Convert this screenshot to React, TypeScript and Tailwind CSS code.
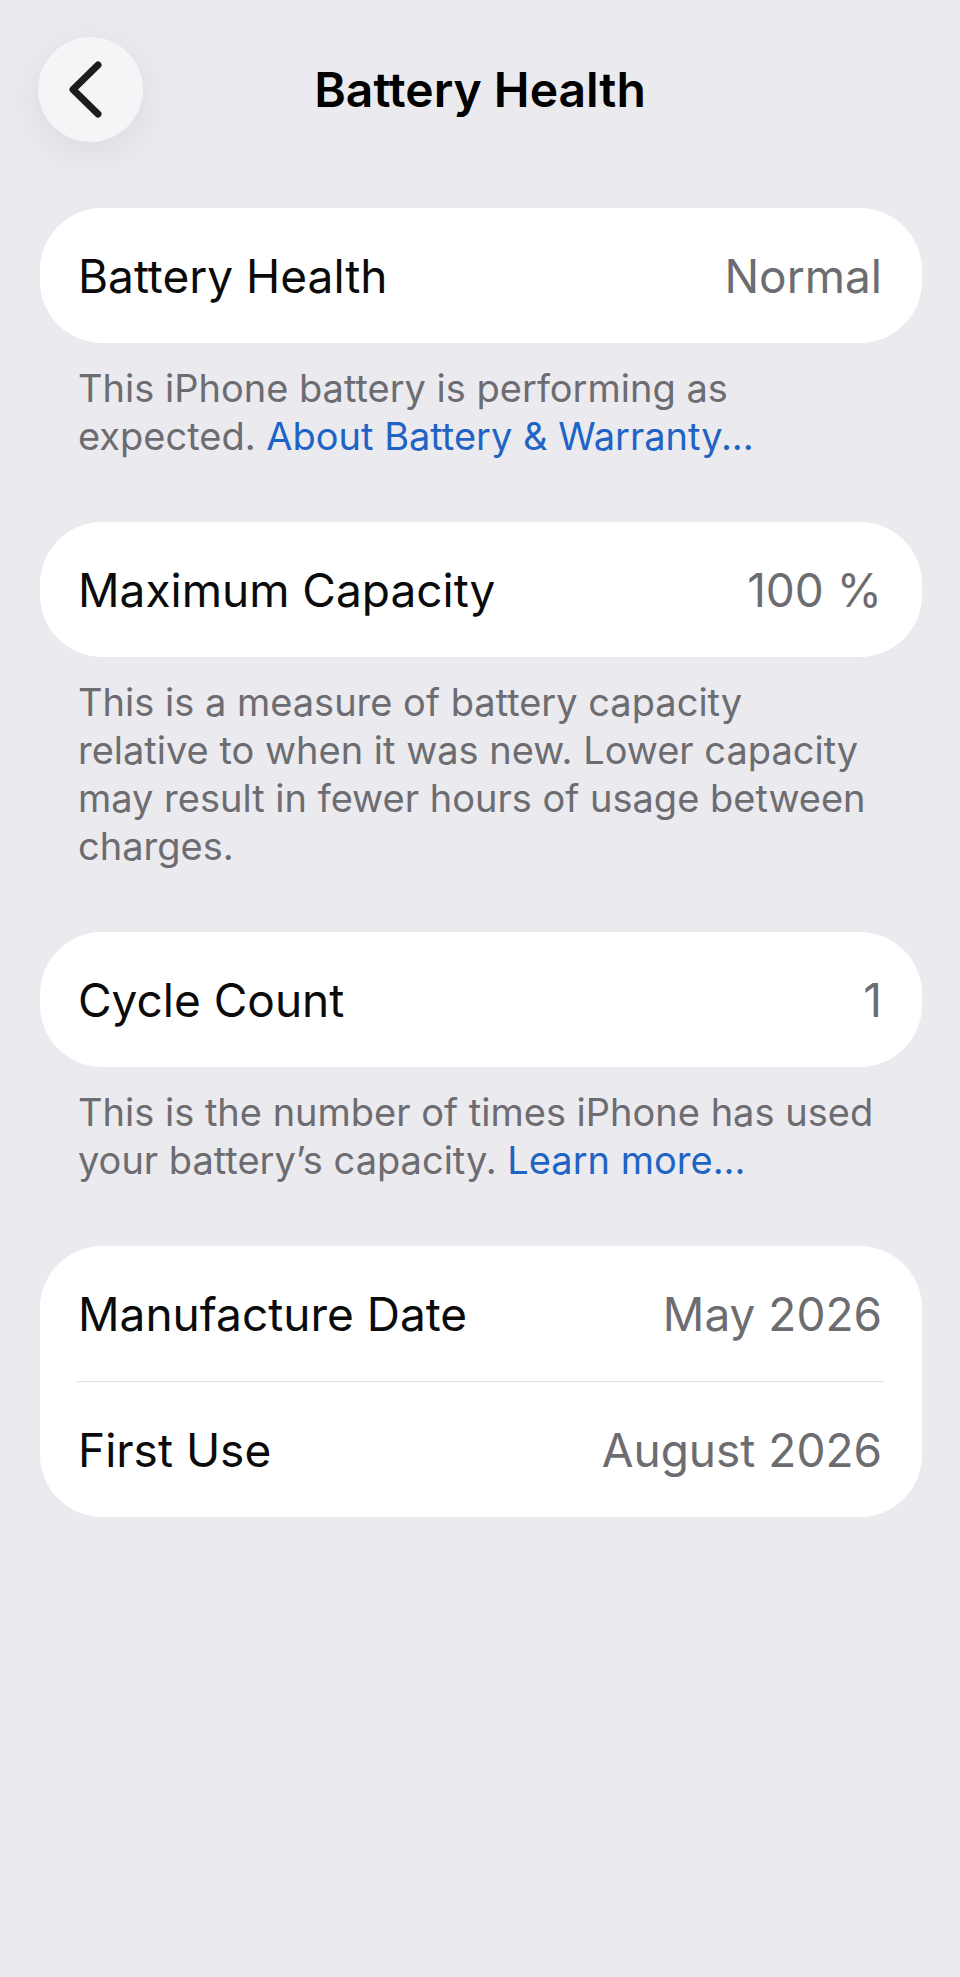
const font = "font-['Inter','Liberation_Sans',sans-serif]";

function Row({ label, value }: { label: string; value: string }) {
  return (
    <div className="flex h-[135px] items-center justify-between pl-[38px] pr-[40px]">
      <span className="text-[46px] leading-none text-[#0b0b0c]">{label}</span>
      <span className="text-[46px] leading-none text-[#6c6c71]">{value}</span>
    </div>
  );
}

function Note({ children }: { children: React.ReactNode }) {
  return (
    <p className="mt-[21px] mb-[62px] pl-[78px] pr-[10px] text-[38px] leading-[48px] whitespace-nowrap text-[#6c6c71]">
      {children}
    </p>
  );
}

function Link({ children }: { children: React.ReactNode }) {
  return <span className="text-[#1f63c4]">{children}</span>;
}

export default function App() {
  return (
    <div className={`min-h-[1977px] w-full bg-[#eaeaef] ${font}`}>
      <header className="relative h-[208px]">
        <button
          type="button"
          className="absolute left-[38px] top-[37px] flex h-[105px] w-[105px] items-center justify-center rounded-full bg-[#f5f5f7] shadow-[0_10px_40px_rgba(0,0,0,0.07)]"
        >
          <svg width="105" height="105" viewBox="0 0 105 105" fill="none">
            <path
              d="M60 28 L35 52.5 L60 77"
              stroke="#1c1c1e"
              strokeWidth="7"
              strokeLinecap="round"
              strokeLinejoin="round"
            />
          </svg>
        </button>
        <h1 className="pt-[63px] text-center text-[48px] font-semibold leading-[54px] text-black">
          Battery Health
        </h1>
      </header>

      <main className="ml-[40px] mr-[38px]">
        <div className="rounded-[62px] bg-white">
          <Row label="Battery Health" value="Normal" />
        </div>
        <div className="-mx-[40px]">
          <Note>
            This iPhone battery is performing as
            <br />
            expected. <Link>About Battery &amp; Warranty...</Link>
          </Note>
        </div>

        <div className="rounded-[62px] bg-white">
          <Row label="Maximum Capacity" value="100 %" />
        </div>
        <div className="-mx-[40px]">
          <Note>
            This is a measure of battery capacity
            <br />
            relative to when it was new. Lower capacity
            <br />
            may result in fewer hours of usage between
            <br />
            charges.
          </Note>
        </div>

        <div className="rounded-[62px] bg-white">
          <Row label="Cycle Count" value="1" />
        </div>
        <div className="-mx-[40px]">
          <Note>
            This is the number of times iPhone has used
            <br />
            your battery’s capacity. <Link>Learn more...</Link>
          </Note>
        </div>

        <div className="rounded-[62px] bg-white">
          <Row label="Manufacture Date" value="May 2026" />
          <div className="ml-[37px] mr-[38px] h-px bg-[#e1e1e4]" />
          <Row label="First Use" value="August 2026" />
        </div>
      </main>
    </div>
  );
}
